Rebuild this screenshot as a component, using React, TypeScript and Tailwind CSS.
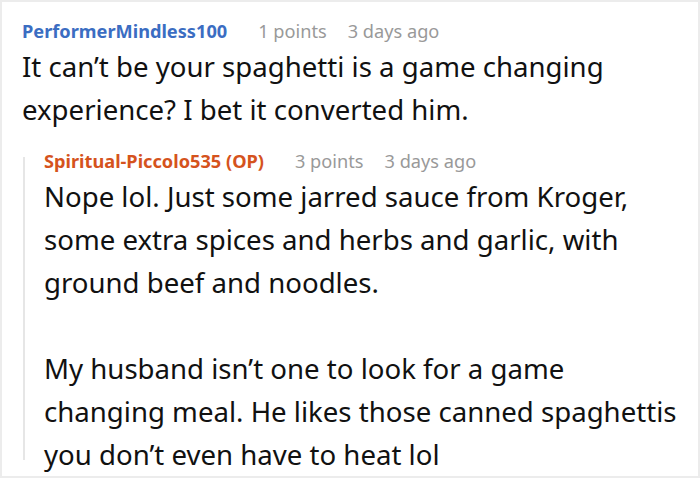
import React from 'react';

const CommentHeader: React.FC<{ user: string; userClass: string; points: string; time: string }> = ({ user, userClass, points, time }) => (
  <div className="flex items-baseline text-[18.2px] leading-[24px]">
    <span className={`font-bold ${userClass}`}>{user}</span>
    <span className="ml-[31px] text-[#999999]">{points}</span>
    <span className="ml-[21px] text-[#999999]">{time}</span>
  </div>
);

export default function App() {
  return (
    <div
      className="w-[700px] h-[478px] bg-white border-2 border-[#ececec] overflow-hidden text-[#111111]"
      style={{ fontFamily: '"Noto Sans", "Open Sans", sans-serif' }}
    >
      <div className="pl-[20px] pt-[17px]">
        <CommentHeader user="PerformerMindless100" userClass="text-[#3b6dc2]" points="1 points" time="3 days ago" />
        <p className="mt-[2px] text-[27.6px] leading-[43px] w-[650px]">
          It can’t be your spaghetti is a game changing experience? I bet it converted him.
        </p>
        <div className="mt-[18px] flex">
          <div className="w-[2px] bg-[#e6e6e6] mt-[8px] mb-[16px] ml-[1px]" />
          <div className="pl-[19px]">
            <CommentHeader user="Spiritual-Piccolo535 (OP)" userClass="text-[#d5531d]" points="3 points" time="3 days ago" />
            <p className="mt-[2px] text-[27.6px] leading-[43px] w-[636px]">
              Nope lol. Just some jarred sauce from Kroger, some extra spices and herbs and garlic, with ground beef and noodles.
            </p>
            <p className="mt-[43px] text-[27.6px] leading-[43px] w-[636px]">
              My husband isn’t one to look for a game changing meal. He likes those canned spaghettis you don’t even have to heat lol
            </p>
          </div>
        </div>
      </div>
    </div>
  );
}
